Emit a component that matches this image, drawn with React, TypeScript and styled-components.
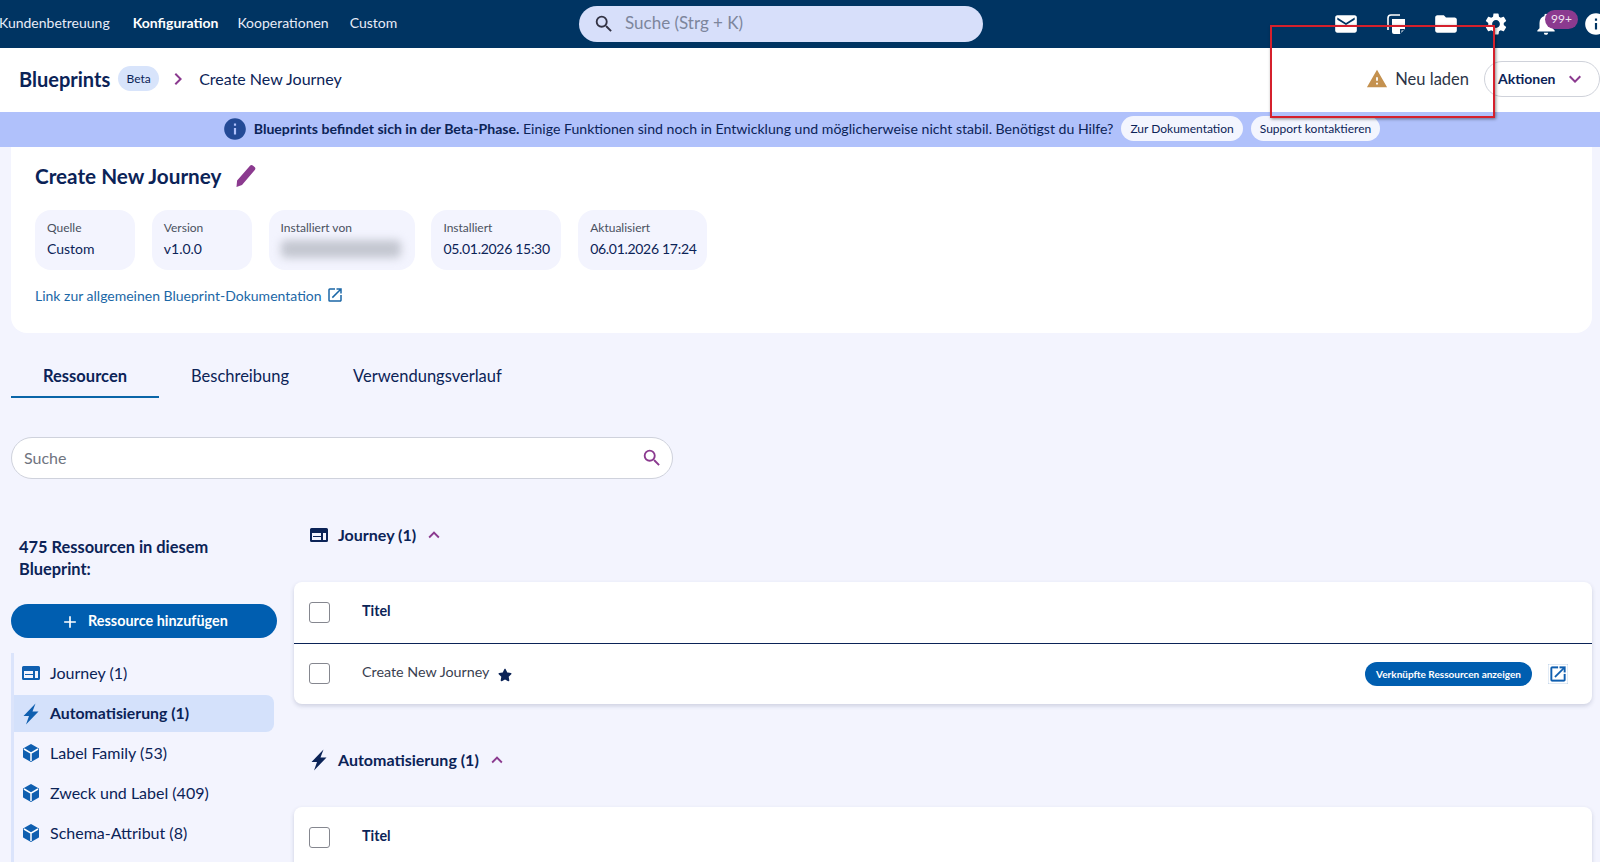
import styled, { createGlobalStyle } from 'styled-components';
import { FaStar } from 'react-icons/fa';
import {
  MdEmail,
  MdFolder,
  MdInfo,
  MdNotifications,
  MdOpenInNew,
  MdSearch,
  MdSettings,
  MdWarning,
  MdAdd,
  MdKeyboardArrowDown,
  MdKeyboardArrowUp,
  MdKeyboardArrowRight,
} from 'react-icons/md';

const navy = '#0b2357';
const blue = '#005eb0';
const plum = '#8b3a8f';

const GlobalStyle = createGlobalStyle`
  html, body { margin: 0; padding: 0; }
  body {
    background: #f3f4fe;
    color: ${navy};
    font-family: "Lato", "Liberation Sans", sans-serif;
    height: 862px;
    overflow: hidden;
  }
  * { box-sizing: border-box; }
`;

const Page = styled.div`
  height: 862px;
  overflow: hidden;
  position: relative;
  width: 1600px;
`;

const TopBar = styled.header`
  align-items: center;
  background: #003462;
  display: flex;
  height: 48px;
`;

const TopNav = styled.nav`
  color: #e8ecf8;
  display: flex;
  flex: none;
  font-size: 14px;
  padding-bottom: 3px;
  width: 579px;
`;

const TopLink = styled.span<{ $active?: boolean; $left: number }>`
  color: ${(p) => (p.$active ? '#ffffff' : '#e8ecf8')};
  font-weight: ${(p) => (p.$active ? 700 : 400)};
  margin-left: ${(p) => p.$left}px;
`;

const TopSearch = styled.div`
  align-items: center;
  background: #d7dffa;
  border-radius: 18px;
  color: #7d869c;
  display: flex;
  flex: none;
  font-size: 17px;
  gap: 10px;
  height: 36px;
  padding: 0 0 3px 14px;
  width: 404px;
  svg { color: #334; margin-top: 3px; }
`;

const TopIcons = styled.div`
  align-items: center;
  color: #fff;
  display: flex;
  flex: none;
  margin-left: 338px;
`;

const TopIcon = styled.span`
  align-items: center;
  display: flex;
  justify-content: center;
  position: relative;
  width: 50px;
`;

const Badge = styled.span`
  background: ${plum};
  border-radius: 10px;
  color: #f0e4f2;
  font-size: 12px;
  height: 19px;
  left: 24px;
  line-height: 18px;
  position: absolute;
  text-align: center;
  top: -1px;
  width: 33px;
`;

const Crumbs = styled.div`
  align-items: center;
  background: #fff;
  display: flex;
  height: 64px;
  padding: 0 0 3px 19px;
`;

const CrumbTitle = styled.span`
  font-size: 20px;
  font-weight: 700;
`;

const BetaPill = styled.span`
  background: #d8e4fb;
  border-radius: 13px;
  font-size: 12px;
  height: 25px;
  line-height: 25px;
  margin-left: 8px;
  text-align: center;
  width: 41px;
`;

const CrumbArrow = styled(MdKeyboardArrowRight)`
  color: ${plum};
  margin-left: 7px;
`;

const CrumbCurrent = styled.span`
  font-size: 16px;
  margin-left: 9px;
`;

const Reload = styled.span`
  align-items: center;
  color: #2c3446;
  display: flex;
  font-size: 16.500px;
  gap: 7px;
  margin-left: auto;
  svg { color: #c4914f; }
`;

const ActionButton = styled.span`
  align-items: center;
  border: 1px solid #cfd2da;
  border-radius: 18px;
  display: flex;
  font-size: 14px;
  font-weight: 700;
  height: 36px;
  justify-content: space-between;
  margin-left: 15px;
  padding: 0 12px 0 13px;
  width: 116px;
  svg { color: ${plum}; }
`;

const Banner = styled.div`
  align-items: center;
  background: #b0c1fb;
  display: flex;
  font-size: 14.100px;
  height: 35px;
  justify-content: center;
  padding: 0 0 2px 2px;
`;

const BannerIcon = styled(MdInfo)`
  color: #234a96;
  margin-right: 6px;
`;

const BannerLink = styled.span`
  background: #f3f5fe;
  border-radius: 13px;
  font-size: 12px;
  height: 25px;
  line-height: 25px;
  margin-left: 8px;
  padding: 0 9px;
`;

const Content = styled.main`
  padding: 0 8px 0 11px;
`;

const InfoCard = styled.section`
  background: #fff;
  border-radius: 0 0 16px 16px;
  height: 186px;
  padding: 15px 24px 0;
`;

const CardTitle = styled.h1`
  align-items: center;
  display: flex;
  font-size: 20.700px;
  font-weight: 700;
  gap: 14px;
  height: 28px;
  margin: 0;
`;

const MetaRow = styled.div`
  display: flex;
  gap: 16.800px;
  margin-top: 20px;
`;

const MetaTile = styled.div<{ $width: number }>`
  background: #f3f4fe;
  border-radius: 16px;
  height: 60px;
  padding: 10px 12px 0;
  width: ${(p) => p.$width}px;
`;

const MetaLabel = styled.div`
  color: #4a5160;
  font-size: 12px;
  line-height: 15px;
`;

const MetaValue = styled.div<{ $date?: boolean }>`
  font-size: 14px;
  letter-spacing: ${(p) => (p.$date ? '-0.3px' : '0')};
  line-height: 18px;
  margin-top: 5px;
  white-space: nowrap;
`;

const Blurred = styled.div`
  background: #c4c7d1;
  border-radius: 5px;
  filter: blur(4px);
  height: 18px;
  margin-top: 5px;
  width: 120px;
`;

const DocLink = styled.div`
  align-items: center;
  color: #1b67a6;
  display: flex;
  font-size: 14px;
  gap: 4px;
  margin-top: 16px;
`;

const Tabs = styled.div`
  display: flex;
  margin-top: 22px;
`;

const Tab = styled.div<{ $active?: boolean }>`
  border-bottom: 2px solid ${(p) => (p.$active ? '#0a65a8' : 'transparent')};
  font-size: 16.500px;
  font-weight: ${(p) => (p.$active ? 700 : 400)};
  height: 43px;
  line-height: 42px;
  padding: 0 32px;
`;

const SearchBox = styled.div`
  align-items: center;
  background: #fff;
  border: 1px solid #cfd2dc;
  border-radius: 21px;
  color: #6f7480;
  display: flex;
  font-size: 16px;
  height: 42px;
  justify-content: space-between;
  margin-top: 39px;
  padding: 0 9px 2px 12px;
  width: 662px;
  svg { color: ${plum}; margin-top: 2px; }
`;

const Columns = styled.div`
  display: flex;
  gap: 17px;
  margin-top: 44px;
`;

const Sidebar = styled.aside`
  flex: none;
  padding-top: 13px;
  width: 266px;
`;

const SideTitle = styled.div`
  font-size: 16.400px;
  font-weight: 700;
  line-height: 22px;
  padding-left: 8px;
  width: 230px;
`;

const AddButton = styled.div`
  align-items: center;
  background: ${blue};
  border-radius: 17px;
  color: #fff;
  display: flex;
  font-size: 14.400px;
  font-weight: 700;
  gap: 8px;
  height: 34px;
  justify-content: center;
  margin-top: 24px;
  padding-bottom: 2px;
  svg { margin-top: 3px; }
`;

const SideList = styled.div`
  border-left: 3px solid #dbe4fb;
  margin-top: 15px;
  padding-bottom: 40px;
`;

const SideItem = styled.div<{ $active?: boolean }>`
  align-items: center;
  background: ${(p) => (p.$active ? '#d4e1fb' : 'transparent')};
  border-radius: ${(p) => (p.$active ? '0 8px 8px 0' : '0')};
  display: flex;
  font-size: ${(p) => (p.$active ? '15.800px' : '16px')};
  font-weight: ${(p) => (p.$active ? 700 : 400)};
  gap: 9px;
  height: ${(p) => (p.$active ? '37px' : '40px')};
  margin: ${(p) => (p.$active ? '2px 0 1px' : '0')};
  padding: 0 0 2px 7px;
  width: 260px;
  svg { flex: none; margin-top: 2px; }
`;

const MainColumn = styled.div`
  flex: 1;
`;

const SectionHead = styled.h2<{ $spaced?: boolean }>`
  align-items: center;
  display: flex;
  font-size: 16px;
  font-weight: 700;
  gap: 9px;
  height: 24px;
  margin: ${(p) => (p.$spaced ? '44px' : '0')} 0 35px;
  padding: 0 0 2px 15px;
  svg { margin-top: 2px; }
`;

const Chevron = styled(MdKeyboardArrowUp)`
  color: ${plum};
  margin-left: -2px;
`;

const TableCard = styled.div`
  background: #fff;
  border-radius: 8px;
  box-shadow: 0 2px 4px rgba(40, 50, 90, 0.18);
`;

const Row = styled.div<{ $head?: boolean }>`
  align-items: center;
  border-bottom: ${(p) => (p.$head ? `1px solid ${navy}` : 'none')};
  color: ${(p) => (p.$head ? navy : '#3a4150')};
  display: flex;
  font-size: 14.300px;
  font-weight: ${(p) => (p.$head ? 700 : 400)};
  height: ${(p) => (p.$head ? '62px' : '60px')};
  padding: 0 24px 1px 15px;
`;

const Checkbox = styled.span`
  background: #fff;
  border: 1.500px solid #85878f;
  border-radius: 3px;
  flex: none;
  height: 21px;
  margin-right: 32px;
  width: 21px;
`;

const CellText = styled.span`
  margin-bottom: 4px;
`;

const StarIcon = styled(FaStar)`
  color: ${navy};
  margin: 3px 0 0 9px;
`;

const LinkedButton = styled.span`
  background: ${blue};
  border-radius: 12px;
  color: #fff;
  font-size: 10px;
  font-weight: 700;
  height: 24px;
  line-height: 24px;
  margin-left: auto;
  text-align: center;
  width: 167px;
`;

const OpenIcon = styled(MdOpenInNew)`
  color: #0f5fb0;
  margin-left: 16px;
  stroke: currentColor;
  stroke-width: 0.3;
`;

const RedFrame = styled.div`
  border: 2px solid #d5202c;
  box-shadow: 1px 1px 3px rgba(0, 0, 0, 0.45);
  height: 93px;
  left: 1270px;
  pointer-events: none;
  position: absolute;
  top: 25px;
  width: 225px;
`;

const JourneyIcon = ({ color }: { color: string }) => (
  <svg width="20" height="20" viewBox="0 0 20 20">
    <path
      fill={color}
      fillRule="evenodd"
      d="M2.500 3h15A1.500 1.500 0 0 1 19 4.500v11a1.500 1.500 0 0 1-1.500 1.500h-15A1.500 1.500 0 0 1 1 15.500v-11A1.500 1.500 0 0 1 2.500 3zM3 8v7h9v-3H4v-1h8V8H3zm11 0v7h3V8h-3z"
    />
  </svg>
);

const BoltIcon = ({ color }: { color: string }) => (
  <svg width="20" height="22" viewBox="0 0 20 22">
    <path fill={color} d="M14.500.5 2.500 13H8L5 21.500 17.500 8.500h-6z" />
  </svg>
);

const CubeIcon = () => (
  <svg width="20" height="20" viewBox="0 0 20 20">
    <path fill="#0f5fb0" stroke="#0f5fb0" strokeWidth="2" strokeLinejoin="round" d="M10 2l7 4v8l-7 4-7-4V6z" />
    <path fill="none" stroke="#fff" strokeWidth="1.500" d="M3 6l7 4.200L17 6M10 10.200V18" />
  </svg>
);

const PencilIcon = () => (
  <svg width="22" height="24" viewBox="0 0 22 24">
    <path fill={plum} d="M1.500 23l.6-6.500L15 1.800a2 2 0 0 1 2.800-.2l1.800 1.500a2 2 0 0 1 .2 2.800L7 21z" />
  </svg>
);

const DocsIcon = () => (
  <svg width="22" height="24" viewBox="0 0 22 24">
    <path fill="none" stroke="#fff" strokeWidth="1.600" d="M3 18V6a3 3 0 0 1 3-3h9" />
    <path fill="#fff" d="M7 7h13v10l-5 5H9a2 2 0 0 1-2-2z" />
    <path fill="#003462" d="M15 22v-5h5l-1.500 1.500h-2v2z" />
  </svg>
);

const metas = [
  { label: 'Quelle', value: 'Custom', width: 100 },
  { label: 'Version', value: 'v1.0.0', width: 100 },
  { label: 'Installiert von', width: 146 },
  { label: 'Installiert', value: '05.01.2026 15:30', width: 130, date: true },
  { label: 'Aktualisiert', value: '06.01.2026 17:24', width: 129, date: true },
];

const App = () => {
  return (
    <>
      <GlobalStyle />
      <Page>
        <TopBar>
          <TopNav>
            <TopLink $left={-1}>Kundenbetreuung</TopLink>
            <TopLink $left={23} $active>Konfiguration</TopLink>
            <TopLink $left={19}>Kooperationen</TopLink>
            <TopLink $left={21}>Custom</TopLink>
          </TopNav>
          <TopSearch>
            <MdSearch size={22} />
            Suche (Strg + K)
          </TopSearch>
          <TopIcons>
            <TopIcon><MdEmail size={26} /></TopIcon>
            <TopIcon><DocsIcon /></TopIcon>
            <TopIcon><MdFolder size={26} /></TopIcon>
            <TopIcon><MdSettings size={26} /></TopIcon>
            <TopIcon>
              <MdNotifications size={26} />
              <Badge>99+</Badge>
            </TopIcon>
            <TopIcon><MdInfo size={26} /></TopIcon>
          </TopIcons>
        </TopBar>

        <Crumbs>
          <CrumbTitle>Blueprints</CrumbTitle>
          <BetaPill>Beta</BetaPill>
          <CrumbArrow size={24} />
          <CrumbCurrent>Create New Journey</CrumbCurrent>
          <Reload>
            <MdWarning size={22} />
            Neu laden
          </Reload>
          <ActionButton>
            Aktionen
            <MdKeyboardArrowDown size={24} />
          </ActionButton>
        </Crumbs>

        <Banner>
          <BannerIcon size={26} />
          <span>
            <b>Blueprints befindet sich in der Beta-Phase.</b> Einige Funktionen sind noch in Entwicklung und möglicherweise nicht stabil. Benötigst du Hilfe?
          </span>
          <BannerLink>Zur Dokumentation</BannerLink>
          <BannerLink>Support kontaktieren</BannerLink>
        </Banner>

        <Content>
          <InfoCard>
            <CardTitle>
              Create New Journey
              <PencilIcon />
            </CardTitle>
            <MetaRow>
              {metas.map((m) => (
                <MetaTile key={m.label} $width={m.width}>
                  <MetaLabel>{m.label}</MetaLabel>
                  {m.value ? <MetaValue $date={m.date}>{m.value}</MetaValue> : <Blurred />}
                </MetaTile>
              ))}
            </MetaRow>
            <DocLink>
              Link zur allgemeinen Blueprint-Dokumentation
              <MdOpenInNew size={18} />
            </DocLink>
          </InfoCard>

          <Tabs>
            <Tab $active>Ressourcen</Tab>
            <Tab>Beschreibung</Tab>
            <Tab>Verwendungsverlauf</Tab>
          </Tabs>

          <SearchBox>
            Suche
            <MdSearch size={22} />
          </SearchBox>

          <Columns>
            <Sidebar>
              <SideTitle>475 Ressourcen in diesem Blueprint:</SideTitle>
              <AddButton>
                <MdAdd size={20} />
                Ressource hinzufügen
              </AddButton>
              <SideList>
                <SideItem><JourneyIcon color="#0f5fb0" />Journey (1)</SideItem>
                <SideItem $active><BoltIcon color="#0f5fb0" />Automatisierung (1)</SideItem>
                <SideItem><CubeIcon />Label Family (53)</SideItem>
                <SideItem><CubeIcon />Zweck und Label (409)</SideItem>
                <SideItem><CubeIcon />Schema-Attribut (8)</SideItem>
              </SideList>
            </Sidebar>

            <MainColumn>
              <SectionHead>
                <JourneyIcon color={navy} />
                Journey (1)
                <Chevron size={22} />
              </SectionHead>
              <TableCard>
                <Row $head><Checkbox /><CellText>Titel</CellText></Row>
                <Row>
                  <Checkbox />
                  <CellText>Create New Journey</CellText>
                  <StarIcon size={14} />
                  <LinkedButton>Verknüpfte Ressourcen anzeigen</LinkedButton>
                  <OpenIcon size={20} />
                </Row>
              </TableCard>

              <SectionHead $spaced>
                <BoltIcon color={navy} />
                Automatisierung (1)
                <Chevron size={22} />
              </SectionHead>
              <TableCard>
                <Row $head><Checkbox /><CellText>Titel</CellText></Row>
              </TableCard>
            </MainColumn>
          </Columns>
        </Content>

        <RedFrame />
      </Page>
    </>
  );
};

export default App;
